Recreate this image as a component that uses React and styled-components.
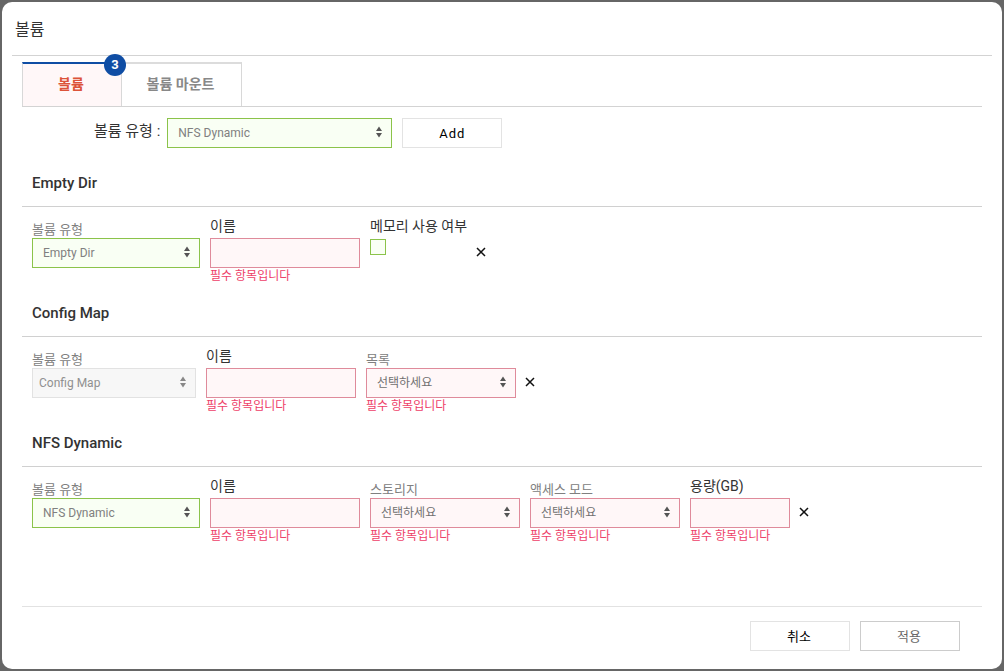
import React from "react";
import styled, { createGlobalStyle, css } from "styled-components";

const GlobalStyle = createGlobalStyle`
  *, *::before, *::after { box-sizing: border-box; }
  body {
    margin: 0;
    background: #666;
    color: #333;
    font-family: Roboto, "Noto Sans CJK KR", sans-serif;
    font-size: 14px;
  }
  button, input, select { font-family: inherit; margin: 0; }
`;

const tones = {
  valid: { border: "#8bc34a", background: "#f9fff4", color: "#808080" },
  error: { border: "#df8b9b", background: "#fff7f8", color: "#707070" },
  disabled: { border: "#e2e2e2", background: "#f7f7f7", color: "#909090" },
};

const tone = css`
  border: 1px solid ${(p) => tones[p.$tone].border};
  background: ${(p) => tones[p.$tone].background};
  color: ${(p) => tones[p.$tone].color};
`;

const Backdrop = styled.div`
  display: flex;
  min-height: 100vh;
  padding: 2px;
`;

const Dialog = styled.main`
  display: flex;
  flex: 1;
  flex-direction: column;
  min-width: 0;
  padding: 0 10px 18px;
  border-radius: 10px;
  background: #fff;
`;

const Header = styled.header`
  padding: 16px 3px 13px;
  border-bottom: 1px solid #d3d3d3;
`;

const DialogTitle = styled.h1`
  margin: 0;
  font-size: 16px;
  font-weight: 400;
  line-height: 24px;
`;

const Content = styled.div`
  flex: 1;
  padding: 6px 10px 0;
`;

const Tabs = styled.div`
  display: flex;
  border-bottom: 1px solid #d3d3d3;
`;

const Tab = styled.button`
  position: relative;
  width: ${(p) => (p.$active ? 100 : 120)}px;
  height: 44px;
  padding: 0 2px 2px 0;
  border: 0 solid #d8d8d8;
  border-top: 2px solid ${(p) => (p.$active ? "#0f4da4" : "#dcdcdc")};
  border-left-width: ${(p) => (p.$active ? 1 : 0)}px;
  border-right-width: 1px;
  background: ${(p) => (p.$active ? "#fff7f8" : "#fff")};
  color: ${(p) => (p.$active ? "#dc5339" : "#888")};
  font-size: 14px;
  font-weight: 700;
  line-height: 20px;
`;

const Badge = styled.span`
  position: absolute;
  z-index: 1;
  top: -10px;
  right: -5px;
  width: 22px;
  height: 22px;
  border-radius: 50%;
  background: #0f4da4;
  color: #fff;
  font-size: 13px;
  font-weight: 700;
  line-height: 22px;
  text-align: center;
`;

const Toolbar = styled.div`
  display: flex;
  align-items: center;
  gap: 10px;
  padding: 11px 0 25px 72px;
`;

const TypePicker = styled.div`
  display: flex;
  gap: 7px;
`;

const ToolbarLabel = styled.label`
  font-size: 15px;
  line-height: 26px;
`;

const Button = styled.button`
  width: 100px;
  height: 30px;
  padding: 0 2px 2px 0;
  border: 1px solid ${(p) => (p.$muted ? "#ccc" : "#e3e3e3")};
  background: #fff;
  color: ${(p) => (p.$muted ? "#666" : "#000")};
  font-size: 13px;
`;

const AddButton = styled(Button)`
  padding: 0;
  letter-spacing: 1px;
`;

const SelectBox = styled.div`
  position: relative;
  width: ${(p) => p.$width}px;
`;

const NativeSelect = styled.select`
  ${tone}
  display: block;
  width: 100%;
  height: 30px;
  padding: 0 20px 0 ${(p) => (p.$tone === "disabled" ? 6 : 10)}px;
  border-radius: 0;
  appearance: none;
  font-size: 12px;
  opacity: 1;
`;

const Arrows = styled.svg`
  position: absolute;
  top: 8px;
  right: 9px;
  width: 8px;
  height: 12px;
  fill: ${(p) => (p.$dim ? "#888" : "#555")};
  pointer-events: none;
`;

const TextInput = styled.input`
  ${tone}
  display: block;
  width: ${(p) => p.$width}px;
  height: 30px;
  padding: 0 10px;
  border-radius: 0;
  font-size: 12px;
`;

const Checkbox = styled.input`
  ${tone}
  display: block;
  width: 16px;
  height: 16px;
  margin-top: 1px;
  appearance: none;
`;

const SectionTitle = styled.h2`
  margin: 0;
  padding: 0 10px 13px;
  border-bottom: 1px solid #d0d0d0;
  font-size: 15px;
  font-weight: 500;
  line-height: 20px;
`;

const SectionBody = styled.div`
  display: flex;
  align-items: flex-start;
  padding: 10px 10px 19px;
`;

const Fields = styled.div`
  display: flex;
  align-items: flex-start;
  gap: 10px;
`;

const FieldBox = styled.div`
  display: flex;
  flex-direction: column;
`;

const FieldLabel = styled.label`
  padding: ${(p) => (p.$soft ? "5px 0 0" : "1px 0 4px")};
  color: ${(p) => (p.$soft ? "#808080" : "#333")};
  font-size: ${(p) => (p.$soft ? 13 : 14)}px;
  line-height: 16px;
  white-space: nowrap;
`;

const FieldError = styled.span`
  color: #ee4068;
  font-size: 12px;
  line-height: 16px;
`;

const RemoveButton = styled.button`
  display: flex;
  align-items: center;
  justify-content: center;
  width: 28px;
  height: 30px;
  margin-top: 20px;
  padding: 0;
  border: 0;
  background: none;
`;

const Footer = styled.footer`
  display: flex;
  justify-content: flex-end;
  gap: 10px;
  margin: 0 10px;
  padding: 14px 22px 0;
  border-top: 1px solid #e2e2e2;
`;

function Select({ id, width, state, value }) {
  return (
    <SelectBox $width={width}>
      <NativeSelect id={id} $tone={state} disabled={state === "disabled"}>
        <option>{value}</option>
      </NativeSelect>
      <Arrows $dim={state === "disabled"} viewBox="0 0 8 12" aria-hidden="true">
        <path d="M4 0.5 7 5H1ZM1 7h6L4 11.5Z" />
      </Arrows>
    </SelectBox>
  );
}

function Field({ id, label, kind, width, state = "error", value }) {
  return (
    <FieldBox>
      <FieldLabel htmlFor={id} $soft={kind === "select"}>{label}</FieldLabel>
      {kind === "select" && <Select id={id} width={width} state={state} value={value} />}
      {kind === "text" && <TextInput id={id} type="text" $width={width} $tone={state} />}
      {kind === "check" && <Checkbox id={id} type="checkbox" $tone={state} />}
      {state === "error" && <FieldError>필수 항목입니다</FieldError>}
    </FieldBox>
  );
}

const volumes = [
  {
    title: "Empty Dir",
    fields: [
      { label: "볼륨 유형", kind: "select", width: 168, state: "valid", value: "Empty Dir" },
      { label: "이름", kind: "text", width: 150 },
      { label: "메모리 사용 여부", kind: "check", state: "valid" },
    ],
  },
  {
    title: "Config Map",
    fields: [
      { label: "볼륨 유형", kind: "select", width: 164, state: "disabled", value: "Config Map" },
      { label: "이름", kind: "text", width: 150 },
      { label: "목록", kind: "select", width: 150, value: "선택하세요" },
    ],
  },
  {
    title: "NFS Dynamic",
    fields: [
      { label: "볼륨 유형", kind: "select", width: 168, state: "valid", value: "NFS Dynamic" },
      { label: "이름", kind: "text", width: 150 },
      { label: "스토리지", kind: "select", width: 150, value: "선택하세요" },
      { label: "액세스 모드", kind: "select", width: 150, value: "선택하세요" },
      { label: "용량(GB)", kind: "text", width: 100 },
    ],
  },
];

export default function App() {
  return (
    <>
      <GlobalStyle />
      <Backdrop>
        <Dialog>
          <Header>
            <DialogTitle>볼륨</DialogTitle>
          </Header>
          <Content>
            <Tabs role="tablist">
              <Tab type="button" role="tab" aria-selected="true" $active>
                볼륨
                <Badge>3</Badge>
              </Tab>
              <Tab type="button" role="tab" aria-selected="false">볼륨 마운트</Tab>
            </Tabs>
            <Toolbar>
              <TypePicker>
                <ToolbarLabel htmlFor="volume-type">볼륨 유형 :</ToolbarLabel>
                <Select id="volume-type" width={225} state="valid" value="NFS Dynamic" />
              </TypePicker>
              <AddButton type="button">Add</AddButton>
            </Toolbar>
            {volumes.map((volume, v) => (
              <section key={volume.title}>
                <SectionTitle>{volume.title}</SectionTitle>
                <SectionBody>
                  <Fields>
                    {volume.fields.map((field, f) => (
                      <Field key={field.label} id={`volume-${v}-${f}`} {...field} />
                    ))}
                  </Fields>
                  <RemoveButton type="button" aria-label={`${volume.title} 삭제`}>
                    <svg width="10" height="10" viewBox="0 0 10 10" aria-hidden="true">
                      <path d="M1 1 9 9M9 1 1 9" stroke="#111" strokeWidth="1.5" fill="none" />
                    </svg>
                  </RemoveButton>
                </SectionBody>
              </section>
            ))}
          </Content>
          <Footer>
            <Button type="button">취소</Button>
            <Button type="button" $muted>적용</Button>
          </Footer>
        </Dialog>
      </Backdrop>
    </>
  );
}
